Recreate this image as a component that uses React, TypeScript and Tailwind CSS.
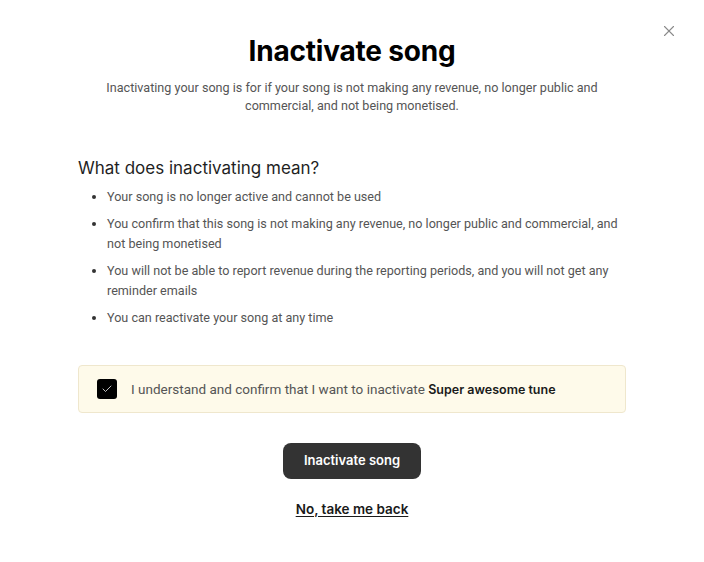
import React, { useState } from 'react';
import { X, Check } from 'lucide-react';

const bullets = [
  'Your song is no longer active and cannot be used',
  'You confirm that this song is not making any revenue, no longer public and commercial, and not being monetised',
  'You will not be able to report revenue during the reporting periods, and you will not get any reminder emails',
  'You can reactivate your song at any time',
];

export default function App() {
  const [confirmed, setConfirmed] = useState(true);

  return (
    <div className="relative w-[704px] h-[562px] bg-white font-['Inter',sans-serif] text-[#1a1a1a]">
      <button className="absolute right-[26px] top-[22px] text-[#8a8a8a]">
        <X size={18} strokeWidth={1.5} />
      </button>

      <div className="flex flex-col items-center pt-[33px]">
        <h1 className="text-[28px] leading-[36px] font-bold tracking-[-0.2px] text-black">Inactivate song</h1>
        <p className="mt-[10px] w-[510px] text-center font-['Roboto',sans-serif] text-[12.6px] leading-[18px] text-[#555]">
          Inactivating your song is for if your song is not making any revenue, no longer public and commercial, and not being monetised.
        </p>
      </div>

      <div className="mx-[78px] mt-[41px]">
        <h2 className="text-[17px] leading-[24px] text-[#1f1f1f]">What does inactivating mean?</h2>
        <ul className="mt-[7px] space-y-[7px] pl-[29px] list-disc marker:text-[#333] font-['Roboto',sans-serif]">
          {bullets.map((b) => (
            <li key={b} className="text-[12.6px] leading-[20px] text-[#555]">
              {b}
            </li>
          ))}
        </ul>

        <label className="mt-[37px] flex items-center h-[48px] rounded border border-[#efe7cd] bg-[#fefaea] px-[18px] cursor-pointer">
          <span
            onClick={() => setConfirmed(!confirmed)}
            className={`flex items-center justify-center w-[20px] h-[20px] rounded-[3px] ${confirmed ? 'bg-black' : 'border border-[#999] bg-white'}`}
          >
            {confirmed && <Check size={12} strokeWidth={1.5} className="text-white" />}
          </span>
          <span className="ml-[14px] font-['Roboto',sans-serif] text-[13.5px] text-[#555]">
            I understand and confirm that I want to inactivate <span className="font-['Inter',sans-serif] text-[12.5px] font-semibold text-[#1a1a1a]">Super awesome tune</span>
          </span>
        </label>
      </div>

      <div className="flex flex-col items-center mt-[30px]">
        <button className="h-[36px] w-[138px] rounded-lg bg-[#333] text-white text-[13px] font-semibold">Inactivate song</button>
        <a href="#" className="mt-[20px] text-[13.5px] font-semibold text-[#1a1a1a] underline underline-offset-2">No, take me back</a>
      </div>
    </div>
  );
}
